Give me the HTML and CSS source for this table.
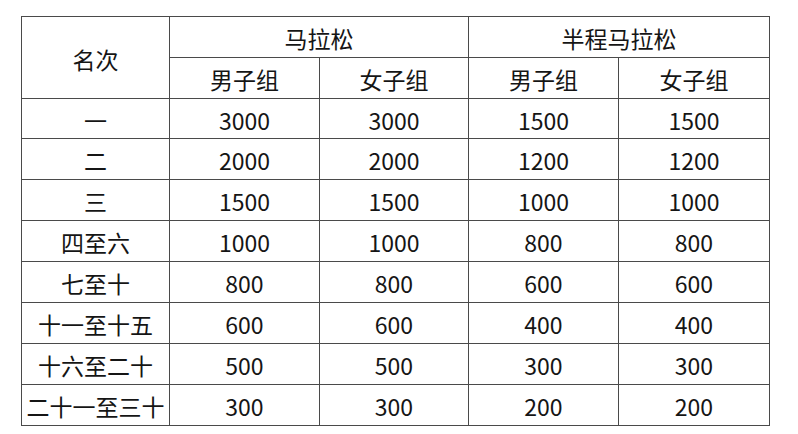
FILE: index.html
```html
<!DOCTYPE html>
<html lang="zh">
<head>
<meta charset="utf-8">
<link rel="stylesheet" href="styles.css">
</head>
<body>
<table class="prize">
  <colgroup>
    <col class="c1"><col class="c2"><col class="c3"><col class="c4"><col class="c5">
  </colgroup>
  <thead>
    <tr class="hr">
      <th rowspan="2">名次</th>
      <th colspan="2">马拉松</th>
      <th colspan="2">半程马拉松</th>
    </tr>
    <tr class="hr">
      <th>男子组</th><th>女子组</th><th>男子组</th><th>女子组</th>
    </tr>
  </thead>
  <tbody>
    <tr><td>一</td><td>3000</td><td>3000</td><td>1500</td><td>1500</td></tr>
    <tr><td>二</td><td>2000</td><td>2000</td><td>1200</td><td>1200</td></tr>
    <tr><td>三</td><td>1500</td><td>1500</td><td>1000</td><td>1000</td></tr>
    <tr><td>四至六</td><td>1000</td><td>1000</td><td>800</td><td>800</td></tr>
    <tr><td>七至十</td><td>800</td><td>800</td><td>600</td><td>600</td></tr>
    <tr><td>十一至十五</td><td>600</td><td>600</td><td>400</td><td>400</td></tr>
    <tr><td>十六至二十</td><td>500</td><td>500</td><td>300</td><td>300</td></tr>
    <tr><td>二十一至三十</td><td>300</td><td>300</td><td>200</td><td>200</td></tr>
  </tbody>
</table>
</body>
</html>
```

FILE: styles.css
```css
html, body {
  margin: 0;
  padding: 0;
  background: #ffffff;
}
body {
  padding: 16px 0 0 21px;
  font-family: "Noto Sans CJK SC", "Noto Sans", sans-serif;
  color: #151515;
}
.prize {
  border-collapse: collapse;
  table-layout: fixed;
  width: 748px;
}
.c1 { width: 148px; }
.c2 { width: 150px; }
.c3 { width: 149px; }
.c4 { width: 150px; }
.c5 { width: 151px; }
.prize th,
.prize td {
  border: 1px solid #4a4a4a;
  height: 38px;
  padding: 2px 0 0;
  text-align: center;
  vertical-align: middle;
  font-size: 23px;
  font-weight: normal;
  line-height: 28px;
}
.prize tbody tr:first-child td {
  height: 37px;
}
```
